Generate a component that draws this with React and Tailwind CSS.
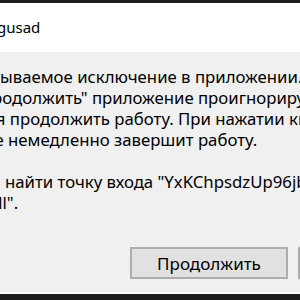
export default function App() {
  const lines = [
    { text: "Необрабатываемое исключение в приложении. При нажатии кнопки", ml: "ml-[-88px]" },
    { text: "\"Продолжить\" приложение проигнорирует ошибку и", ml: "ml-[-27px]" },
    { text: "попытается продолжить работу. При нажатии кнопки \"Выход\"", ml: "ml-[-89px]" },
    { text: "приложение немедленно завершит работу.", ml: "ml-[-98px]" },
  ];

  return (
    <div
      className="w-[300px] h-[300px] overflow-hidden bg-[#f0f0f0] flex flex-col text-black"
      style={{ fontFamily: '"Noto Sans", "Open Sans", sans-serif' }}
    >
      <div className="h-[3px] bg-[#202020]" />
      <div className="h-[49px] bg-white flex items-center">
        <span className="ml-[-3px] text-[15px] leading-none">gusad</span>
      </div>

      <div className="flex-1 pt-[14px] text-[16.75px] leading-[21px]">
        {lines.map((l, i) => (
          <div key={i} className={`whitespace-nowrap ${l.ml}`}>
            {l.text}
          </div>
        ))}
        <div className="h-[21px]" />
        <div className="whitespace-nowrap ml-[-87px]">
          Не удается найти точку входа "YxKChpsdzUp96jb" в DLL
        </div>
        <div className="whitespace-nowrap ml-[-92px]">"kernel32.dll".</div>

        <div className="flex gap-[10px] pl-[130px] mt-[34px]">
          <button className="w-[158px] h-[32px] shrink-0 border-2 border-[#adadad] bg-[#e1e1e1] text-[17px]">
            Продолжить
          </button>
          <button className="w-[158px] h-[32px] shrink-0 border-2 border-[#adadad] bg-[#e1e1e1] text-[17px]">
            Выход
          </button>
        </div>
      </div>

      <div className="h-[2px] bg-white" />
      <div className="h-[6px] bg-[#1f1f1f]" />
    </div>
  );
}
